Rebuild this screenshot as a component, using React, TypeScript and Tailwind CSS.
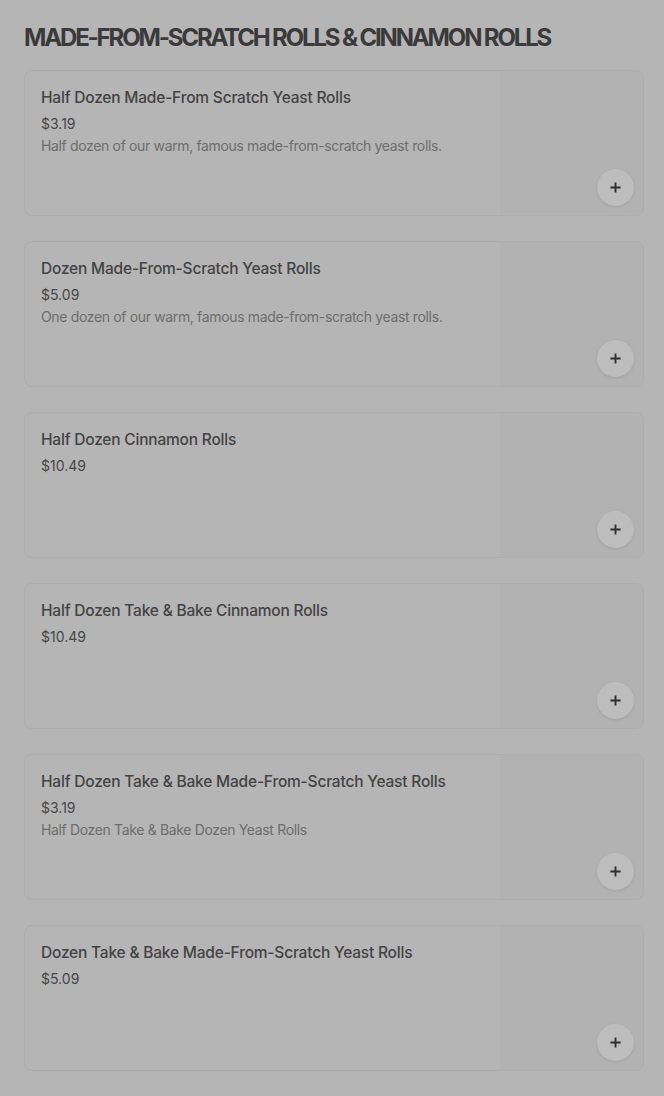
import React from "react";

type Item = {
  name: string;
  price: string;
  description?: string;
};

const items: Item[] = [
  {
    name: "Half Dozen Made-From Scratch Yeast Rolls",
    price: "$3.19",
    description: "Half dozen of our warm, famous made-from-scratch yeast rolls.",
  },
  {
    name: "Dozen Made-From-Scratch Yeast Rolls",
    price: "$5.09",
    description: "One dozen of our warm, famous made-from-scratch yeast rolls.",
  },
  { name: "Half Dozen Cinnamon Rolls", price: "$10.49" },
  { name: "Half Dozen Take & Bake Cinnamon Rolls", price: "$10.49" },
  {
    name: "Half Dozen Take & Bake Made-From-Scratch Yeast Rolls",
    price: "$3.19",
    description: "Half Dozen Take & Bake Dozen Yeast Rolls",
  },
  { name: "Dozen Take & Bake Made-From-Scratch Yeast Rolls", price: "$5.09" },
];

const PlusIcon = () => (
  <svg width="13" height="13" viewBox="0 0 14 14" fill="none">
    <path d="M7 1.5v11M1.5 7h11" stroke="#2e2e2e" strokeWidth="2" />
  </svg>
);

const MenuCard = ({ item }: { item: Item }) => (
  <div className="flex h-[146px] overflow-hidden rounded-lg border border-[#adadad] bg-[#b5b5b5]">
    <div className="flex-1 px-4 pt-[15px]">
      <h3 className="text-[15.5px] font-medium leading-6 tracking-[-0.2px] text-[#434343]">
        {item.name}
      </h3>
      <p className="mt-[4px] text-[14px] leading-5 text-[#474747]">
        {item.price}
      </p>
      {item.description && (
        <p className="mt-[2px] text-[14px] leading-5 tracking-[-0.35px] text-[#6d6d6d]">
          {item.description}
        </p>
      )}
    </div>
    <div className="relative w-[143px] bg-[#b2b2b2]">
      <button className="absolute bottom-[9px] right-[9px] flex h-[37px] w-[37px] items-center justify-center rounded-full bg-[#bdbdbd] shadow-[0_1px_3px_rgba(0,0,0,0.1)]">
        <PlusIcon />
      </button>
    </div>
  </div>
);

export default function App() {
  return (
    <div
      className="min-h-screen bg-[#b5b5b5] pl-6 pr-5 pt-[22px] pb-6"
      style={{ fontFamily: "Inter, 'Liberation Sans', sans-serif" }}
    >
      <h2 className="mb-[16px] text-[24px] font-bold uppercase leading-8 tracking-[-0.09em] text-[#3a3a3a]">
        Made-From-Scratch Rolls &amp; Cinnamon Rolls
      </h2>
      <div className="flex flex-col gap-[25px]">
        {items.map((item) => (
          <MenuCard key={item.name} item={item} />
        ))}
      </div>
    </div>
  );
}
